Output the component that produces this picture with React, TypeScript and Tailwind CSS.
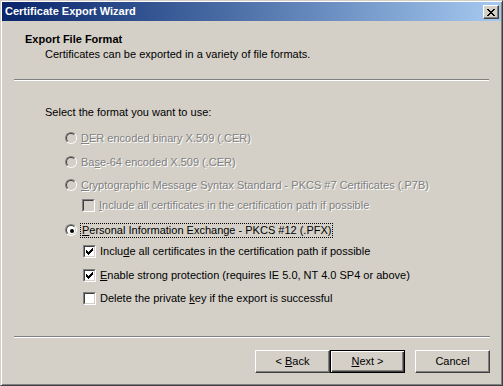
import type { ReactNode } from 'react';

const font = { fontFamily: '"Liberation Sans", Arial, sans-serif' };

function Radio({ checked = false, disabled = false }: { checked?: boolean; disabled?: boolean }) {
  return (
    <span className="relative inline-block w-[12px] h-[12px] shrink-0 rounded-full border border-t-[#808080] border-l-[#808080] border-r-white border-b-white">
      <span
        className={`block w-[10px] h-[10px] rounded-full border border-t-[#404040] border-l-[#404040] border-r-[#d4d0c8] border-b-[#d4d0c8] ${
          disabled ? 'bg-[#d4d0c8]' : 'bg-white'
        }`}
      />
      {checked && <span className="absolute left-[4px] top-[4px] w-[4px] h-[4px] rounded-full bg-black" />}
    </span>
  );
}

function Check({ checked = false, disabled = false }: { checked?: boolean; disabled?: boolean }) {
  return (
    <span className="inline-block w-[13px] h-[13px] shrink-0 border border-t-[#808080] border-l-[#808080] border-r-white border-b-white">
      <span
        className={`flex items-center justify-center w-[11px] h-[11px] border border-t-[#404040] border-l-[#404040] border-r-[#d4d0c8] border-b-[#d4d0c8] ${
          disabled ? 'bg-[#d4d0c8]' : 'bg-white'
        }`}
      >
        {checked && (
          <svg width="7" height="7" viewBox="0 0 7 7" shapeRendering="crispEdges">
            <rect x="6" y="0" width="1" height="1" fill="#000" />
            <rect x="5" y="1" width="2" height="1" fill="#000" />
            <rect x="0" y="2" width="1" height="1" fill="#000" />
            <rect x="4" y="2" width="3" height="1" fill="#000" />
            <rect x="0" y="3" width="2" height="1" fill="#000" />
            <rect x="3" y="3" width="3" height="1" fill="#000" />
            <rect x="0" y="4" width="5" height="1" fill="#000" />
            <rect x="1" y="5" width="3" height="1" fill="#000" />
            <rect x="2" y="6" width="1" height="1" fill="#000" />
          </svg>
        )}
      </span>
    </span>
  );
}

function Label({ disabled, children }: { disabled?: boolean; children: ReactNode }) {
  return (
    <span className={disabled ? 'text-[#808080] [text-shadow:1px_1px_0_#fff]' : 'text-black'}>{children}</span>
  );
}

function Btn({ isDefault, children }: { isDefault?: boolean; children: ReactNode }) {
  return (
    <button
      className={`w-[75px] h-[23px] flex items-center justify-center bg-[#d4d0c8] text-black text-[11px] ${
        isDefault
          ? 'border border-black shadow-[inset_1px_1px_0_#fff,inset_-1px_-1px_0_#404040,inset_-2px_-2px_0_#808080]'
          : 'border border-t-white border-l-white border-r-[#404040] border-b-[#404040] shadow-[inset_-1px_-1px_0_#808080]'
      }`}
    >
      <span>{children}</span>
    </button>
  );
}

export default function App() {
  return (
    <div
      className="w-[503px] h-[386px] bg-[#d4d0c8] border border-t-[#d4d0c8] border-l-[#d4d0c8] border-r-[#404040] border-b-[#404040] shadow-[inset_1px_1px_0_#fff,inset_-1px_-1px_0_#808080] p-[1px] flex flex-col text-[11px] leading-[13px] overflow-hidden"
      style={font}
    >
      {/* title bar */}
      <div className="h-[19px] flex items-start justify-between pl-[3px] pr-[2px] bg-gradient-to-r from-[#0a246a] to-[#a6caf0]">
        <span className="mt-[3px] font-bold text-white">Certificate Export Wizard</span>
        <span className="mt-[3px] w-[16px] h-[14px] flex items-center justify-center bg-[#d4d0c8] border border-t-white border-l-white border-r-[#404040] border-b-[#404040] shadow-[inset_-1px_-1px_0_#808080]">
          <svg width="8" height="7" viewBox="0 0 8 7" shapeRendering="crispEdges">
            <path d="M0 0h2v1h-2zM6 0h2v1h-2zM1 1h2v1h-2zM5 1h2v1h-2zM2 2h4v1h-4zM3 3h2v1h-2zM2 4h4v1h-4zM1 5h2v1h-2zM5 5h2v1h-2zM0 6h2v1h-2zM6 6h2v1h-2z" fill="#000" />
          </svg>
        </span>
      </div>

      {/* header */}
      <div className="mt-[12px] ml-[23px] font-bold">Export File Format</div>
      <div className="mt-[2px] ml-[43px]">Certificates can be exported in a variety of file formats.</div>
      <div className="mt-[18px] ml-[12px] w-[475px] h-[2px] border-t border-t-[#808080] border-b border-b-white" />

      {/* body */}
      <div className="flex flex-col">
        <div className="mt-[23px] ml-[43px] h-[16px] flex items-center">Select the format you want to use:</div>

        <div className="mt-[10px] ml-[63px] h-[16px] flex items-center gap-[4px]">
          <Radio disabled />
          <Label disabled>
            <u>D</u>ER encoded binary X.509 (.CER)
          </Label>
        </div>
        <div className="mt-[8px] ml-[63px] h-[16px] flex items-center gap-[4px]">
          <Radio disabled />
          <Label disabled>
            Ba<u>s</u>e-64 encoded X.509 (.CER)
          </Label>
        </div>
        <div className="mt-[7px] ml-[63px] h-[16px] flex items-center gap-[4px]">
          <Radio disabled />
          <Label disabled>
            <u>C</u>ryptographic Message Syntax Standard - PKCS #7 Certificates (.P7B)
          </Label>
        </div>
        <div className="mt-[4px] ml-[80px] h-[16px] flex items-center gap-[4px]">
          <Check disabled />
          <Label disabled>
            <u>I</u>nclude all certificates in the certification path if possible
          </Label>
        </div>

        <div className="mt-[9px] ml-[63px] h-[16px] flex items-center gap-[3px]">
          <Radio checked />
          <span className="border border-dotted border-black px-[1px] leading-[13px]">
            <u>P</u>ersonal Information Exchange - PKCS #12 (.PFX)
          </span>
        </div>
        <div className="mt-[5px] ml-[81px] h-[16px] flex items-center gap-[4px]">
          <Check checked />
          <Label>
            Inclu<u>d</u>e all certificates in the certification path if possible
          </Label>
        </div>
        <div className="mt-[8px] ml-[81px] h-[16px] flex items-center gap-[4px]">
          <Check checked />
          <Label>
            <u>E</u>nable strong protection (requires IE 5.0, NT 4.0 SP4 or above)
          </Label>
        </div>
        <div className="mt-[7px] ml-[81px] h-[16px] flex items-center gap-[4px]">
          <Check />
          <Label>
            Delete the private <u>k</u>ey if the export is successful
          </Label>
        </div>
      </div>

      {/* footer */}
      <div className="mt-[30px] ml-[12px] w-[476px] h-[2px] border-t border-t-[#808080] border-b border-b-white" />
      <div className="mt-[12px] flex justify-end pr-[11px]">
        <Btn>
          &lt; <u>B</u>ack
        </Btn>
        <Btn isDefault>
          <u>N</u>ext &gt;
        </Btn>
        <div className="w-[10px]" />
        <Btn>Cancel</Btn>
      </div>
    </div>
  );
}
